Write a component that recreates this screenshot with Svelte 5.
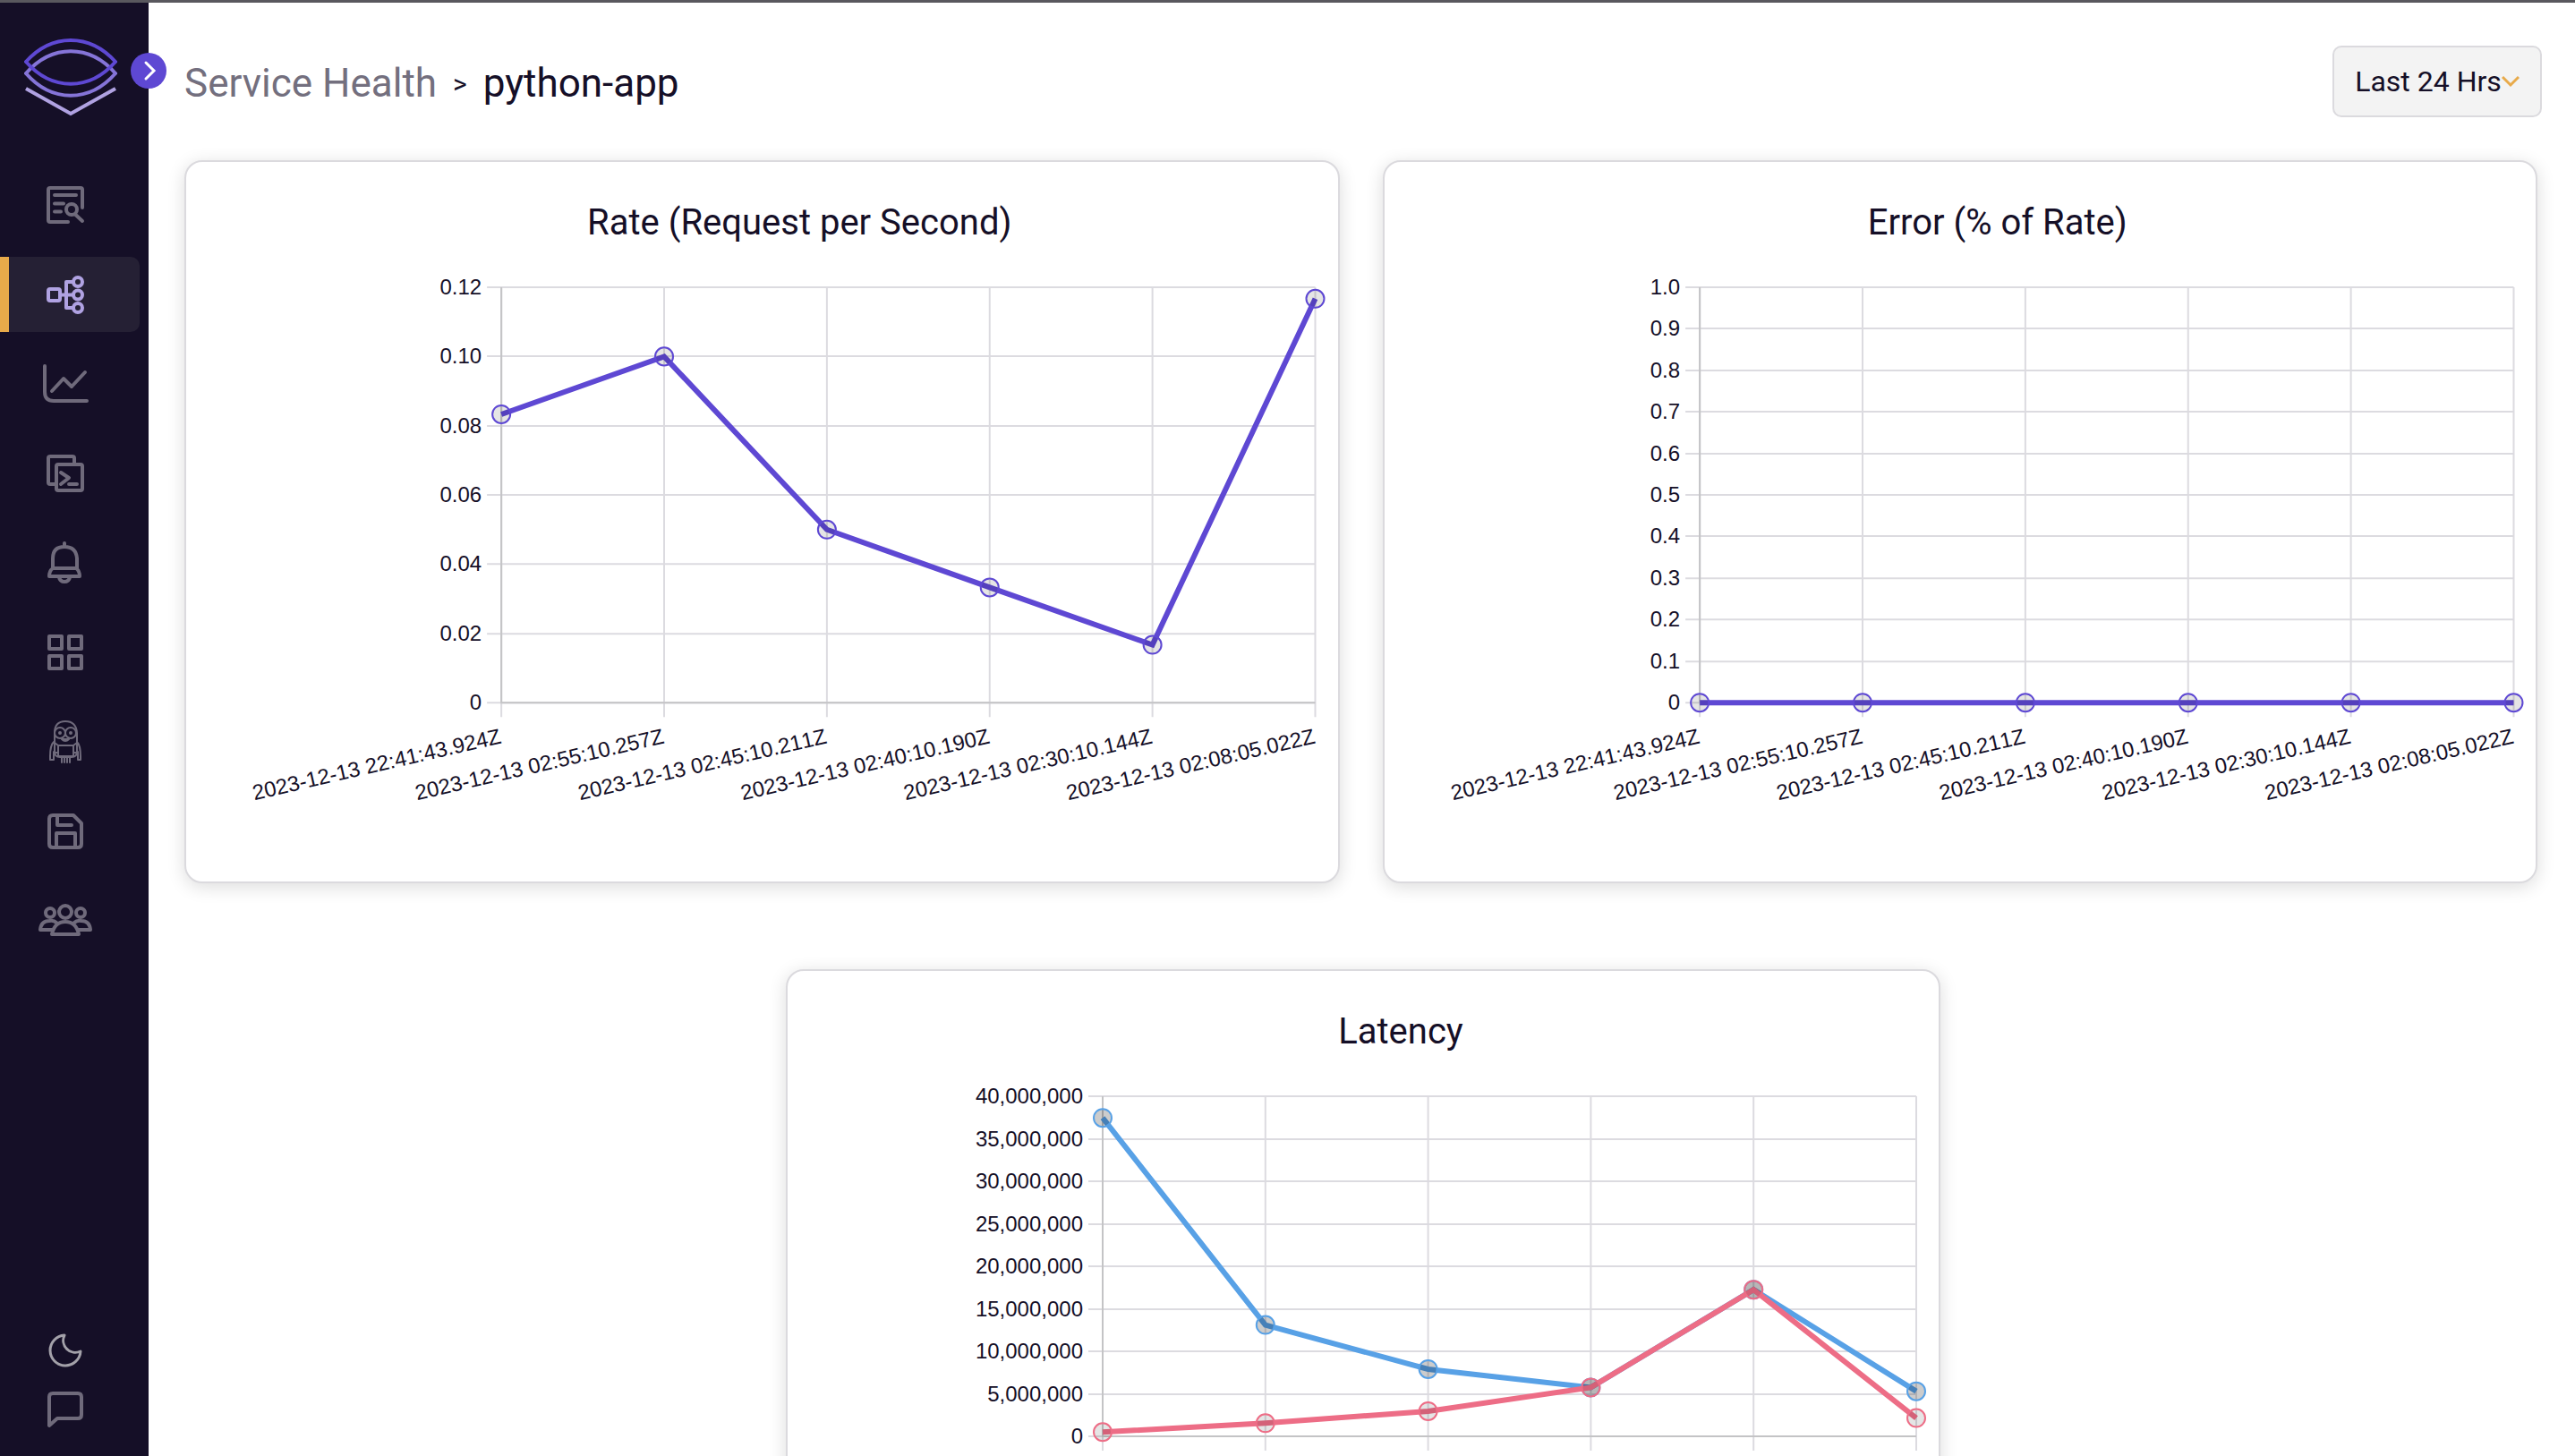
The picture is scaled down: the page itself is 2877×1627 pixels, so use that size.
<script>
  const times = [
    '2023-12-13 22:41:43.924Z',
    '2023-12-13 02:55:10.257Z',
    '2023-12-13 02:45:10.211Z',
    '2023-12-13 02:40:10.190Z',
    '2023-12-13 02:30:10.144Z',
    '2023-12-13 02:08:05.022Z'
  ];
  const thousands = (n) => String(n).replace(/\B(?=(\d{3})+$)/g, ',');
  const steps = (count, format) => Array.from({ length: count + 1 }, (_, i) => (i === 0 ? '0' : format(i)));

  const charts = [
    {
      title: 'Rate (Request per Second)',
      max: 0.12,
      height: 464,
      showTimes: true,
      ticks: steps(6, (i) => (i * 0.02).toFixed(2)),
      series: [{ kind: 'violet', values: [0.0833, 0.1, 0.05, 0.0333, 0.0167, 0.1167] }]
    },
    {
      title: 'Error (% of Rate)',
      max: 1,
      height: 464,
      showTimes: true,
      ticks: steps(10, (i) => (i / 10).toFixed(1)),
      series: [{ kind: 'violet', values: [0, 0, 0, 0, 0, 0] }]
    },
    {
      title: 'Latency',
      max: 40,
      height: 380,
      showTimes: false,
      ticks: steps(8, (i) => thousands(i * 5000000)),
      series: [
        { kind: 'blue', values: [37.45, 13.1, 7.9, 5.75, 17.25, 5.3] },
        { kind: 'pink', values: [0.5, 1.55, 2.95, 5.75, 17.25, 2.15] }
      ]
    }
  ];

  const left = 352;
  const top = 36;
  const width = 909;
  const px = (i) => left + (i * width) / (times.length - 1);
  const py = (chart, v) => top + chart.height - (v / chart.max) * chart.height;
  const ty = (chart, i) => Math.round(top + chart.height - (i * chart.height) / (chart.ticks.length - 1));
</script>

{#snippet card(chart)}
  <section class="card">
    <h2>{chart.title}</h2>
    <svg class="chart" viewBox="0 0 1286 700" role="img" aria-label={chart.title}>
      {#each chart.ticks as tick, i}
        <line class="grid" x1={left - 16} x2={left + width} y1={ty(chart, i)} y2={ty(chart, i)} />
        <text x={left - 22} y={ty(chart, i) + 8} text-anchor="end">{tick}</text>
      {/each}
      {#each times as time, i}
        <line class="grid" x1={px(i)} x2={px(i)} y1={top} y2={top + chart.height + 16} />
        {#if chart.showTimes}
          <text
            transform="translate({px(i) + 1} {top + chart.height + 45}) rotate(-13)"
            text-anchor="end">{time}</text>
        {/if}
      {/each}
      <path class="axis" d="M{left} {top}V{top + chart.height}H{left + width}" />
      {#each chart.series as s}
        <polyline class="line {s.kind}" points={s.values.map((v, i) => `${px(i)},${py(chart, v)}`).join(' ')} />
        {#each s.values as v, i}
          <circle class="dot {s.kind}" cx={px(i)} cy={py(chart, v)} r="10" />
        {/each}
      {/each}
    </svg>
  </section>
{/snippet}

<div class="page">
  <aside>
    <a class="logo" href="#home" aria-label="Home">
      <svg width="104" height="88" viewBox="0 0 104 88">
        <path stroke="#b0a2e2" d="M2 56 52 84 102 56" />
        <path stroke="#8574d8" d="M2 39C31 6 73 6 102 39C73 72 31 72 2 39Z" />
        <path stroke="#5e48d3" d="M2 26C31-6 73-6 102 26C73 59 31 59 2 26Z" />
      </svg>
    </a>
    <button class="expand" aria-label="Expand menu">
      <svg width="40" height="40" viewBox="0 0 40 40"><path d="M17 11 26 20 17 29" /></svg>
    </button>
    <nav>
      <a href="#logs" aria-label="Logs"><svg viewBox="0 0 60 60"><path d="M49 33V13Q49 11 47 11H13Q11 11 11 13V47Q11 49 13 49H33M18 19H42M18 28.500H28M18 37.500H25M41 40.500 49 48" /><circle cx="37" cy="35" r="6" /></svg></a>
      <a href="#services" class="active" aria-label="Services"><svg viewBox="0 0 60 60"><rect x="11" y="24" width="13" height="13" rx="2" /><path d="M24 30.500H39M39 16H31V45H39" /><circle cx="44" cy="16" r="5" /><circle cx="44" cy="30.500" r="5" /><circle cx="44" cy="45" r="5" /></svg></a>
      <a href="#metrics" aria-label="Metrics"><svg viewBox="0 0 60 60"><path d="M7 10V39Q7 49 17 49H54M15 38 28 24 37 33 52 17" /></svg></a>
      <a href="#queries" aria-label="Queries"><svg viewBox="0 0 60 60"><path d="M40 20V13Q40 11 38 11H13Q11 11 11 13V40Q11 42 13 42H19M25 29 34 35 25 42M34 42H43" /><rect x="20" y="20" width="29" height="29" rx="2" /></svg></a>
      <a href="#alerts" aria-label="Alerts"><svg viewBox="0 0 60 60"><path d="M29 8V12M16 36V25Q16 12 29 12T43 25V36M16 36H42Q46 39 46 45H12Q12 39 16 36ZM23 46Q24 51 29 51T35 46" /></svg></a>
      <a href="#dashboards" aria-label="Dashboards"><svg viewBox="0 0 60 60"><path d="M12 12H26V26H12ZM34 12H48V26H34ZM12 34H26V48H12ZM34 34H48V48H34Z" /></svg></a>
      <a href="#assistant" aria-label="Assistant"><svg class="thin" viewBox="0 0 60 60"><path d="M18 41V20Q18 7 30 7T43 20V41Q43 47 37 47H24Q18 47 18 41ZM17 30Q13 34 13 46V50H17V41M43 30Q47 34 47 46V50H44V41M22 34H39V46H22ZM22 34 18 31M39 34 43 31M22 34V42H18M39 34V42H43M26 27Q30 31 34 27ZM26 47V53M29 47V53M32 47V53M35 47V53" /><circle cx="24" cy="20" r="6" /><circle cx="36" cy="20" r="6" /><circle cx="24" cy="20" r="1" /><circle cx="36" cy="20" r="1" /></svg></a>
      <a href="#saved" aria-label="Saved"><svg viewBox="0 0 60 60"><path d="M17 12H39L48 21V44Q48 48 44 48H16Q12 48 12 44V16Q12 12 16 12ZM21 12V23H37M20 48V32H41V48" /></svg></a>
      <a href="#teams" aria-label="Teams"><svg viewBox="0 0 60 60"><circle cx="30" cy="20" r="7" /><circle cx="13" cy="21" r="5" /><circle cx="47" cy="21" r="5" /><path d="M15 45Q18 31 30 31T45 45ZM15 40H2Q3 30 12 30Q17 29 20 32M45 40H58Q57 30 48 30Q43 29 40 32" /></svg></a>
    </nav>
    <div class="tools">
      <button aria-label="Dark mode"><svg class="bright" viewBox="0 0 60 60"><path d="M29 13A17 17 0 1 0 47 31A13.500 13.500 0 0 1 29 13Z" /></svg></button>
      <button aria-label="Feedback"><svg viewBox="0 0 60 60"><path d="M12 48V16Q12 12 16 12H44Q48 12 48 16V36Q48 40 44 40H21Z" /></svg></button>
    </div>
  </aside>

  <main>
    <header>
      <div class="crumbs">
        <a href="#services">Service Health</a>
        <span class="sep">&gt;</span>
        <h1>python-app</h1>
      </div>
      <button class="range">
        Last 24 Hrs<svg width="20" height="14" viewBox="0 0 20 14"><path d="M1 2 10 11 19 2" /></svg>
      </button>
    </header>
    <div class="row">
      {@render card(charts[0])}
      {@render card(charts[1])}
    </div>
    <div class="row single">
      {@render card(charts[2])}
    </div>
  </main>
</div>

<style>
  :global(body) {
    margin: 0;
  }
  .page {
    display: flex;
    box-sizing: border-box;
    height: 100vh;
    overflow: hidden;
    border-top: 3px solid #59585e;
    background: #fff;
    color: #150f27;
    font-family: Roboto, sans-serif;
  }
  aside {
    position: relative;
    display: flex;
    flex-direction: column;
    flex: none;
    width: 166px;
    background: #150f27;
  }
  .logo {
    padding: 40px 0 0 27px;
  }
  svg {
    display: block;
    fill: none;
  }
  .logo svg {
    stroke-width: 4;
  }
  button {
    border: 0;
    padding: 0;
    background: none;
    color: inherit;
    font: inherit;
    cursor: pointer;
  }
  .expand {
    position: absolute;
    top: 56px;
    right: -20px;
    width: 40px;
    height: 40px;
    border-radius: 50%;
    background: #5e48d3;
  }
  .expand path {
    stroke: #fff;
    stroke-width: 3;
    stroke-linecap: round;
  }
  nav {
    display: grid;
    gap: 16px;
    padding-top: 56px;
  }
  nav a {
    display: block;
    box-sizing: border-box;
    width: 156px;
    height: 84px;
    padding: 12px 0 12px 43px;
  }
  nav a.active {
    border-left: 10px solid #e8aa4a;
    border-radius: 0 10px 10px 0;
    padding-left: 33px;
    background: #252034;
  }
  nav svg,
  .tools svg {
    width: 60px;
    height: 60px;
    stroke: #6f6a7b;
    stroke-width: 4;
    stroke-linecap: round;
    stroke-linejoin: round;
  }
  nav .active svg {
    stroke: #b0a2e2;
  }
  nav svg.thin {
    stroke-width: 2;
  }
  .tools {
    display: grid;
    gap: 6px;
    justify-content: start;
    margin-top: auto;
    padding: 0 0 22px 43px;
  }
  .tools svg.bright {
    stroke: #a3a1a9;
    stroke-width: 3;
  }
  main {
    flex: 1;
    min-width: 0;
    padding: 48px 37px 0 40px;
  }
  header {
    display: flex;
    align-items: center;
    justify-content: space-between;
    margin-bottom: 48px;
  }
  .crumbs {
    display: flex;
    align-items: center;
    gap: 18px;
    padding-top: 4px;
    font-size: 44px;
  }
  .crumbs a {
    color: #736f7e;
    text-decoration: none;
  }
  .sep {
    font-size: 30px;
  }
  h1,
  h2 {
    margin: 0;
    font-weight: 400;
  }
  h1 {
    font-size: 44px;
  }
  .range {
    display: flex;
    align-items: center;
    justify-content: center;
    box-sizing: border-box;
    width: 234px;
    height: 80px;
    border: 2px solid #dbdade;
    border-radius: 10px;
    background: #f3f3f3;
    font-size: 32px;
  }
  .range path {
    stroke: #e8aa4a;
    stroke-width: 3;
  }
  .row {
    display: flex;
    gap: 48px;
    margin-bottom: 96px;
    padding-right: 5px;
  }
  .single {
    justify-content: center;
    padding-right: 0;
  }
  .single .card {
    flex: none;
    width: calc(50% - 27px);
  }
  .card {
    flex: 1;
    box-sizing: border-box;
    min-width: 0;
    border: 2px solid #dbdade;
    border-radius: 20px;
    background: #fff;
    box-shadow: 0 4px 20px rgba(0, 0, 0, 0.14);
  }
  h2 {
    padding: 40px 0 0 84px;
    font-size: 40px;
    line-height: 56px;
    text-align: center;
  }
  .chart {
    width: 100%;
    height: auto;
    padding-top: 8px;
  }
  .chart text {
    fill: #150f27;
    font-family: 'Liberation Sans', Arial, sans-serif;
    font-size: 24px;
    font-kerning: none;
  }
  .grid {
    stroke: #dcdbe0;
    stroke-width: 2;
  }
  .axis {
    stroke: #c4c4c6;
    stroke-width: 2;
  }
  .line {
    stroke-width: 6;
    stroke-linejoin: miter;
  }
  .dot {
    fill: rgba(0, 0, 0, 0.1);
    stroke-width: 2;
  }
  .violet {
    stroke: #5e48d3;
  }
  .blue {
    stroke: #58a1e6;
  }
  .dot.blue {
    fill: rgba(0, 0, 0, 0.2);
  }
  .pink {
    stroke: #ed6d86;
  }
</style>
